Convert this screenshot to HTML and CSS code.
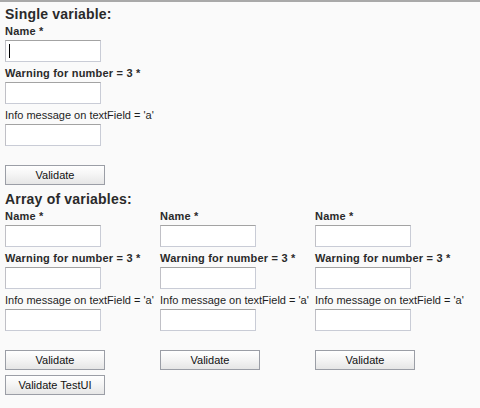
FILE: index.html
```html
<!DOCTYPE html>
<html>
<head>
<meta charset="utf-8">
<title>Validation</title>
<link rel="stylesheet" href="styles.css">
</head>
<body>
<div class="page">
  <h2 class="title">Single variable:</h2>
  <div class="col">
    <div class="label strong">Name *</div>
    <div class="txt focused"><span class="caret"></span></div>
    <div class="label strong">Warning for number = 3 *</div>
    <div class="txt"></div>
    <div class="label">Info message on textField = 'a'</div>
    <div class="txt"></div>
    <div class="btn">Validate</div>
  </div>

  <h2 class="title second">Array of variables:</h2>
  <div class="grid">
    <div class="col">
      <div class="label strong">Name *</div>
      <div class="txt"></div>
      <div class="label strong">Warning for number = 3 *</div>
      <div class="txt"></div>
      <div class="label">Info message on textField = 'a'</div>
      <div class="txt"></div>
      <div class="btn">Validate</div>
    </div>
    <div class="col">
      <div class="label strong">Name *</div>
      <div class="txt"></div>
      <div class="label strong">Warning for number = 3 *</div>
      <div class="txt"></div>
      <div class="label">Info message on textField = 'a'</div>
      <div class="txt"></div>
      <div class="btn">Validate</div>
    </div>
    <div class="col">
      <div class="label strong">Name *</div>
      <div class="txt"></div>
      <div class="label strong">Warning for number = 3 *</div>
      <div class="txt"></div>
      <div class="label">Info message on textField = 'a'</div>
      <div class="txt"></div>
      <div class="btn">Validate</div>
    </div>
  </div>
  <div class="btn testui">Validate TestUI</div>
</div>
</body>
</html>
```
FILE: styles.css
```css
html, body {
  margin: 0;
  padding: 0;
  background: #fafafa;
}
body {
  font-family: "Liberation Sans", Arial, sans-serif;
  color: #1e1e1e;
  height: 408px;
  overflow: hidden;
}
.page {
  border-top: 2px solid #a9a9a9;
  padding: 0 0 0 5px;
}
.title {
  font-size: 14px;
  font-weight: bold;
  line-height: 15px;
  margin: 5px 0 0 0;
  color: #2a2a2a;
  letter-spacing: 0.2px;
}
.title.second {
  margin-top: 7px;
}
.col {
  display: flex;
  flex-direction: column;
  align-items: flex-start;
}
.label {
  font-size: 11px;
  line-height: 14px;
  margin: 4px 0 2px 0;
  white-space: nowrap;
  color: #1e1e1e;
}
.title + .col .label:first-child,
.title + .grid .label:first-child {
  margin-top: 2px;
}
.strong {
  font-weight: bold;
  color: #2a2a2a;
  letter-spacing: 0.2px;
}
.txt {
  position: relative;
  box-sizing: border-box;
  width: 96px;
  height: 22px;
  background: #ffffff;
  border: 1px solid #c9ccd6;
  border-top-color: #a3a3a3;
  border-left-color: #c0c0c6;
}
.caret {
  position: absolute;
  left: 3px;
  top: 3px;
  width: 1px;
  height: 14px;
  background: #000;
}
.btn {
  box-sizing: border-box;
  width: 100px;
  height: 20px;
  margin-top: 19px;
  border: 1px solid #9b9ea6;
  background: linear-gradient(#ffffff, #f4f4f4 50%, #e6e6e6);
  font-size: 11px;
  line-height: 18px;
  text-align: center;
  color: #111;
}
.grid {
  display: grid;
  grid-template-columns: 155px 155px 155px;
}
.btn.testui {
  margin-top: 5px;
}
```
